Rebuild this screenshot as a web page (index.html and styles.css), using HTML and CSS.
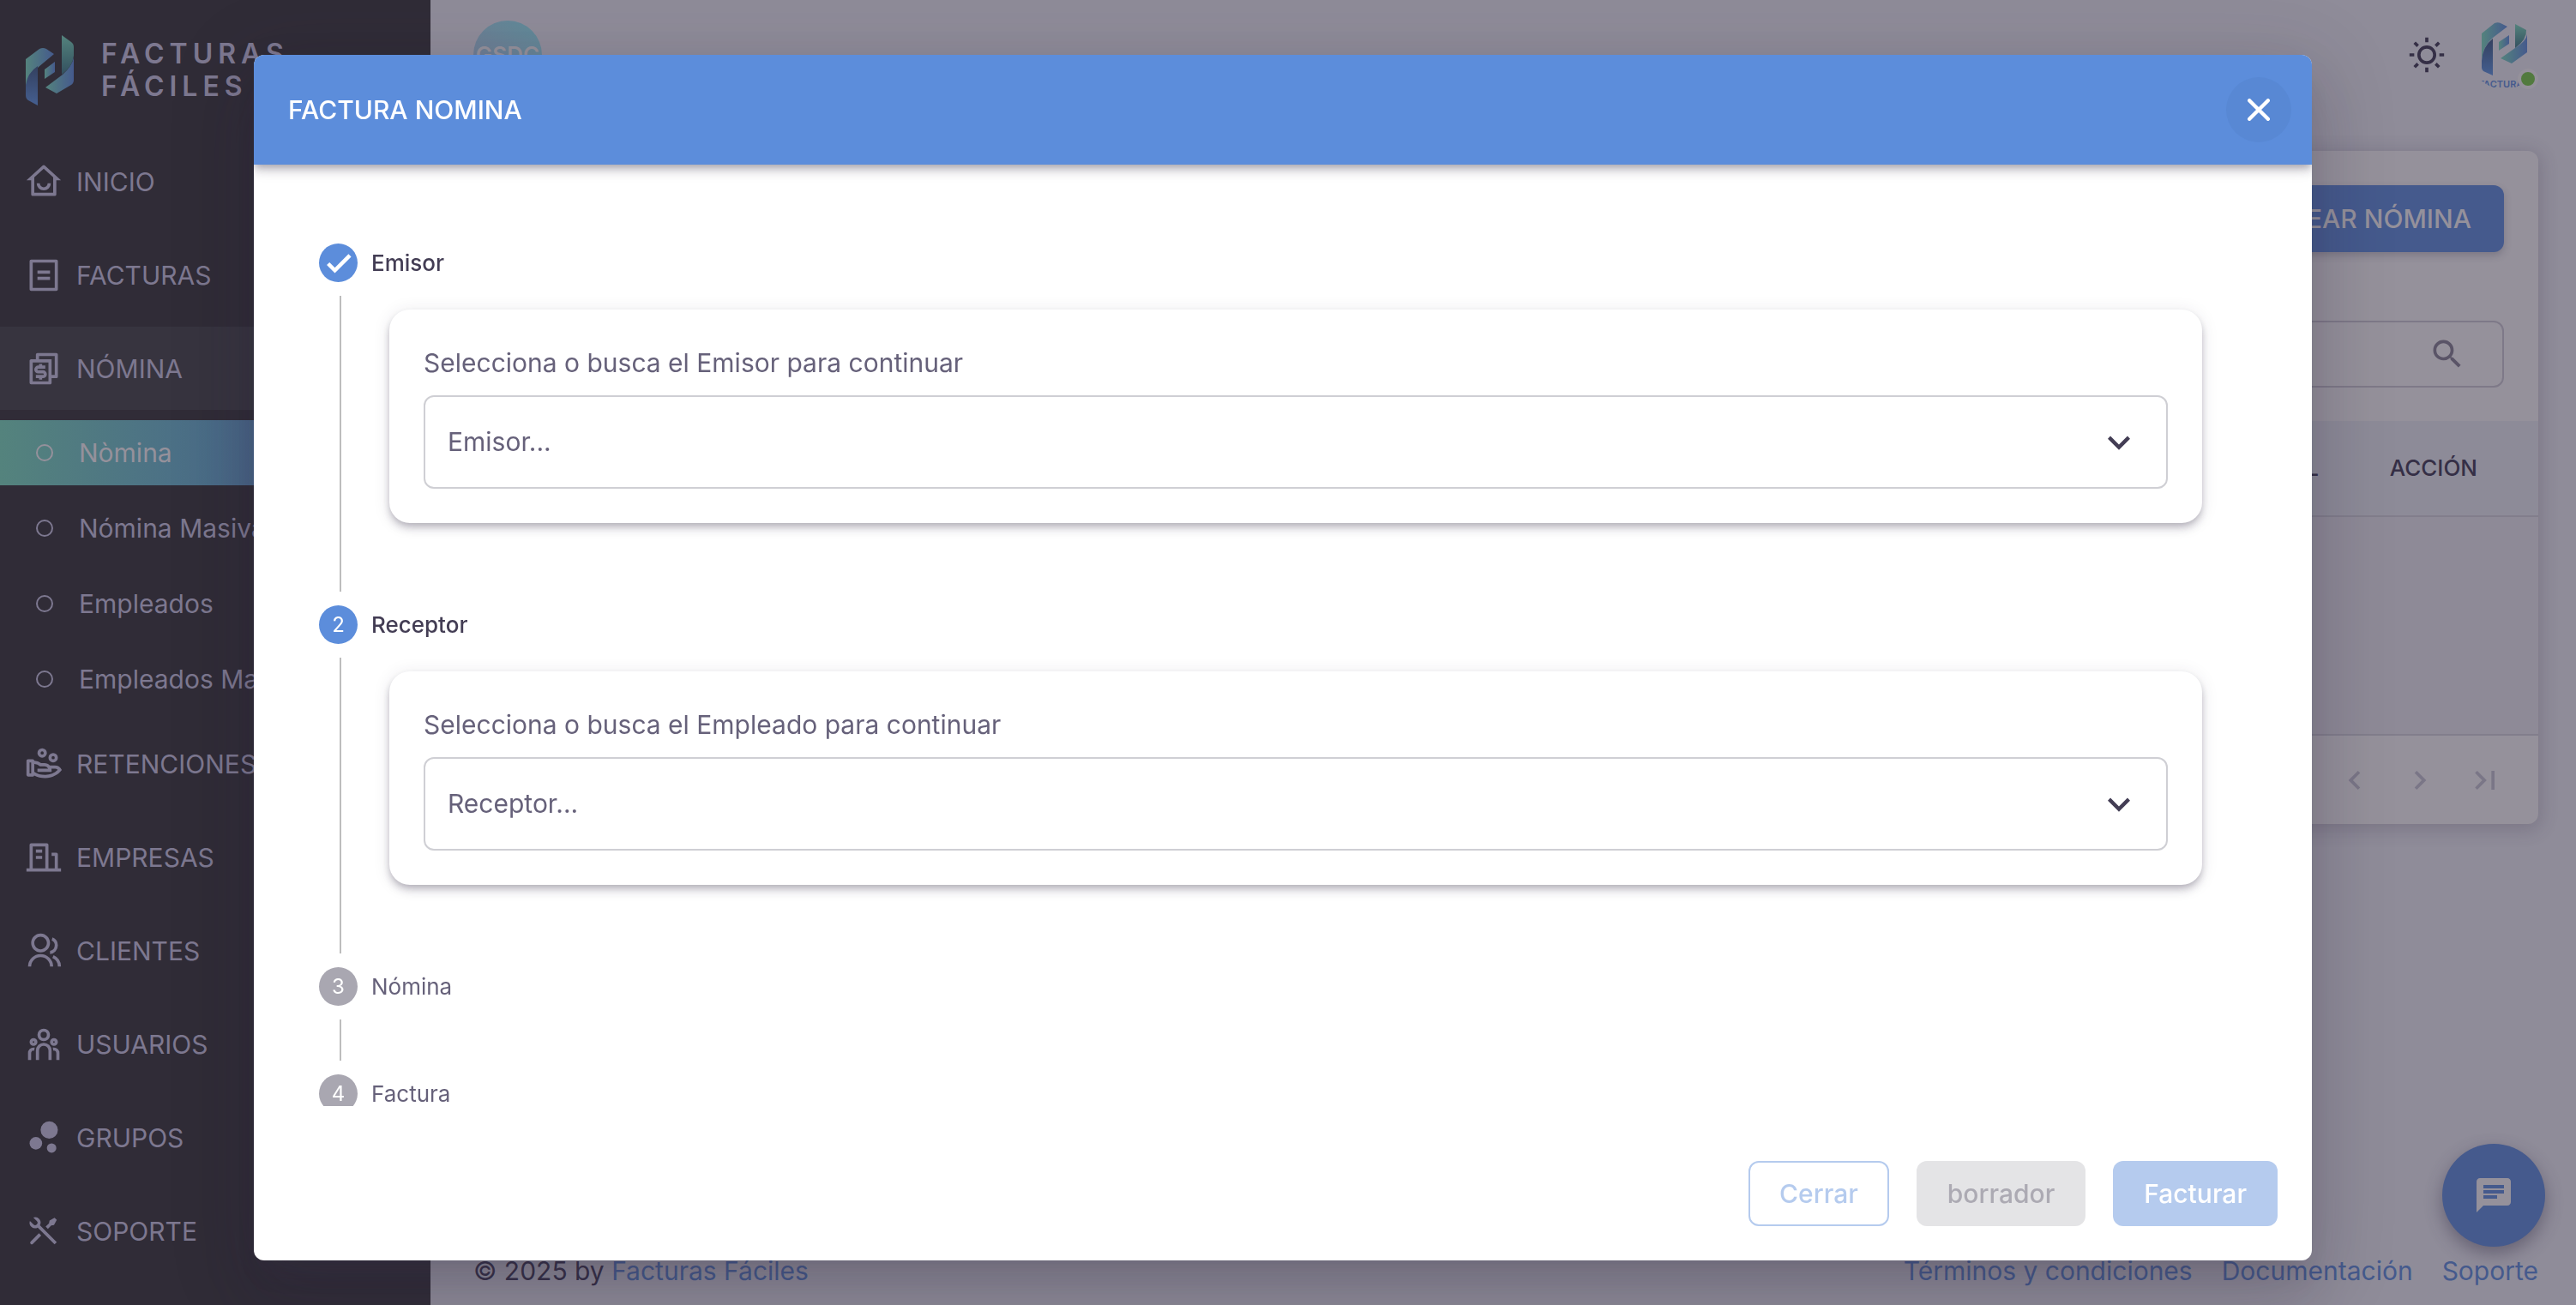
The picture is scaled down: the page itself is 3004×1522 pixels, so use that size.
FILE: index.html
```html
<!DOCTYPE html>
<html lang="es">
<head>
<meta charset="utf-8">
<title>Factura Nomina</title>
<link rel="stylesheet" href="styles.css">
</head>
<body>
<svg class="defs" aria-hidden="true">
  <defs>
    <linearGradient id="brand-gradient" x1="0" y1="0" x2="1" y2="0">
      <stop offset="0" stop-color="#54837d"/>
      <stop offset="1" stop-color="#455a8d"/>
    </linearGradient>
    <linearGradient id="brand-shade" x1="0" y1="1" x2="0" y2="0">
      <stop offset="0" stop-color="#455f90"/>
      <stop offset="1" stop-color="#33405f"/>
    </linearGradient>
    <linearGradient id="brand-shade-top" x1="0" y1="0" x2="0" y2="1">
      <stop offset="0" stop-color="#54837d"/>
      <stop offset="1" stop-color="#33505f"/>
    </linearGradient>
    <symbol id="brand-mark" viewBox="0 0 56 82">
      <path d="M0 28 L16 16 Q20 14 24 16 L33 22 L15 37 Q2 50 0 66 Z" fill="url(#brand-gradient)"/>
      <path d="M0 58 Q2 44 14 36 V82 L3 76 Q0 74 0 70 Z" fill="url(#brand-shade)"/>
      <path d="M22 40 L34 31 V43 L22 51 Z" fill="url(#brand-gradient)"/>
      <path d="M56 26 V52 Q56 56 53 58 L36 68 L23 61 L43 46 Q54 36 56 26 Z" fill="url(#brand-gradient)"/>
      <path d="M42 0 L53 8 Q56 10 56 14 V24 Q55 36 42 46 Z" fill="url(#brand-shade-top)"/>
    </symbol>
    <symbol id="account-mark" viewBox="0 0 53 63">
      <path d="M0 13 L15 1 Q20 -1 24 2 L30 5 L13 18 Q1 28 0 45 Z" fill="url(#brand-gradient)"/>
      <path d="M0 45 Q1 28 13 19 V62 L2 57 Q0 55 0 53 Z" fill="url(#brand-shade)"/>
      <path d="M20 23 L32 15 V25 L20 33 Z" fill="url(#brand-gradient)"/>
      <path d="M53 14 V35 L35 48 L22 42 L39 30 Q52 22 53 14 Z" fill="url(#brand-gradient)"/>
      <path d="M39 2 L52 9 Q53 20 39 30 Z" fill="url(#brand-shade-top)"/>
    </symbol>
  </defs>
</svg>

<div class="app">
  <aside class="sidebar">
    <a class="brand" href="#">
      <svg class="brand-logo"><use href="#brand-mark"/></svg>
      <span class="brand-name">FACTURAS FÁCILES</span>
    </a>
    <nav class="menu">
      <a class="menu-item" href="#"><svg class="icon" viewBox="0 0 24 24"><path d="M19 21H5a1 1 0 01-1-1v-9H1l10.327-9.388a1 1 0 011.346 0L23 11h-3v9a1 1 0 01-1 1zM6 19h12V9.158l-6-5.454-6 5.454V19zm1.500-6h2a2.500 2.500 0 105 0h2a4.500 4.500 0 11-9 0z"/></svg>INICIO</a>
      <a class="menu-item" href="#"><svg class="icon" viewBox="0 0 24 24"><path d="M20 22H4a1 1 0 01-1-1V3a1 1 0 011-1h16a1 1 0 011 1v18a1 1 0 01-1 1zm-1-2V4H5v16h14zM8 9h8v2H8V9zm0 4h8v2H8v-2z"/></svg>FACTURAS</a>
      <a class="menu-item is-open" href="#"><svg class="icon" viewBox="0 0 24 24"><path d="M7 6V3a1 1 0 011-1h12a1 1 0 011 1v14a1 1 0 01-1 1h-3v3c0 .552-.45 1-1.007 1H4.007A1.001 1.001 0 013 21l.003-14c0-.552.45-1 1.007-1H7zm2 0h8v10h2V4H9v2zm-4 2v12h10V8H5zM7 16h4.500a.5.5 0 000-1h-3a2.500 2.500 0 010-5H9V9h2v1h2v2H8.500a.5.5 0 000 1h3a2.500 2.500 0 010 5H11v1H9v-1H7v-2z"/></svg>NÓMINA</a>
      <a class="submenu-item is-active" href="#"><span class="bullet"></span>Nòmina</a>
      <a class="submenu-item" href="#"><span class="bullet"></span>Nómina Masiva</a>
      <a class="submenu-item" href="#"><span class="bullet"></span>Empleados</a>
      <a class="submenu-item" href="#"><span class="bullet"></span>Empleados Masivos</a>
      <a class="menu-item" href="#"><svg class="icon" viewBox="0 0 24 24"><path d="M5 9a.999.999 0 0 1 1 1 6.970 6.970 0 0 1 4.330 1.500h2.170c1.332 0 2.530.579 3.353 1.499L19 13a5 5 0 0 1 4.516 2.851C21.151 18.972 17.322 21 13 21c-2.790 0-5.150-.603-7.060-1.658A.998.998 0 0 1 5 20H2a1 1 0 0 1-1-1v-9a1 1 0 0 1 1-1h3zm1.001 3L6 17.022l.045.032C7.840 18.314 10.178 19 13 19c3.004 0 5.799-1.156 7.835-3.130l.133-.133-.12-.1a2.994 2.994 0 0 0-1.643-.63L19 15l-2.111-.001c.072.322.111.656.111 1v1H8v-2l6.790-.001-.034-.078a2.501 2.501 0 0 0-2.092-1.416L12.500 13.500H9.570A4.985 4.985 0 0 0 6.002 12zM4 11H3v7h1v-7zm14-6a3 3 0 1 1 0 6 3 3 0 0 1 0-6zm0 2a1 1 0 1 0 0 2 1 1 0 0 0 0-2zm-7-5a3 3 0 1 1 0 6 3 3 0 0 1 0-6zm0 2a1 1 0 1 0 0 2 1 1 0 0 0 0-2z"/></svg>RETENCIONES</a>
      <a class="menu-item" href="#"><svg class="icon" viewBox="0 0 24 24"><path d="M21 19h2v2H1v-2h2V4a1 1 0 011-1h10a1 1 0 011 1v15h4v-8h-2V9h3a1 1 0 011 1v9zM5 5v14h8V5H5zm2 6h4v2H7v-2zm0-4h4v2H7V7z"/></svg>EMPRESAS</a>
      <a class="menu-item" href="#"><svg class="icon" viewBox="0 0 24 24"><path d="M2 22a8 8 0 1 1 16 0h-2a6 6 0 1 0-12 0H2zm8-9c-3.315 0-6-2.685-6-6s2.685-6 6-6 6 2.685 6 6-2.685 6-6 6zm0-2c2.210 0 4-1.790 4-4s-1.790-4-4-4-4 1.790-4 4 1.790 4 4 4zm8.284 3.703A8.002 8.002 0 0 1 23 22h-2a6.001 6.001 0 0 0-3.537-5.473l.82-1.824zm-.688-11.290A5.500 5.500 0 0 1 21 8.500a5.499 5.499 0 0 1-5 5.478v-2.013a3.500 3.500 0 0 0 1.041-6.609l.555-1.943z"/></svg>CLIENTES</a>
      <a class="menu-item" href="#"><svg class="icon" viewBox="0 0 24 24"><path d="M12 11a5 5 0 0 1 5 5v6h-2v-6a3 3 0 0 0-2.824-2.995L12 13a3 3 0 0 0-2.995 2.824L9 16v6H7v-6a5 5 0 0 1 5-5zm-6.500 3c.279 0 .55.033.81.094a5.947 5.947 0 0 0-.301 1.575L6 16v.086a1.492 1.492 0 0 0-.356-.08L5.500 16a1.500 1.500 0 0 0-1.493 1.356L4 17.500V22H2v-4.500A3.500 3.500 0 0 1 5.500 14zm13 0a3.500 3.500 0 0 1 3.500 3.500V22h-2v-4.500a1.500 1.500 0 0 0-1.356-1.493L18.500 16c-.175 0-.343.03-.5.085V16c0-.666-.108-1.306-.309-1.904.259-.063.53-.096.809-.096zm-13-6a2.500 2.500 0 1 1 0 5 2.500 2.500 0 0 1 0-5zm13 0a2.500 2.500 0 1 1 0 5 2.500 2.500 0 0 1 0-5zm-13 2a.5.5 0 1 0 0 1 .5.5 0 0 0 0-1zm13 0a.5.5 0 1 0 0 1 .5.5 0 0 0 0-1zM12 2a4 4 0 1 1 0 8 4 4 0 0 1 0-8zm0 2a2 2 0 1 0 0 4 2 2 0 0 0 0-4z"/></svg>USUARIOS</a>
      <a class="menu-item" href="#"><svg class="icon" viewBox="0 0 24 24"><circle cx="15.500" cy="7" r="5.500"/><circle cx="7" cy="15.500" r="4"/><circle cx="17" cy="18.500" r="3"/></svg>GRUPOS</a>
      <a class="menu-item" href="#"><svg class="icon" viewBox="0 0 24 24"><path d="M5.330 3.271a3.500 3.500 0 0 1 4.254 4.963l10.709 10.710-1.414 1.414-10.710-10.710a3.502 3.502 0 0 1-4.962-4.255L5.444 7.630a1.500 1.500 0 1 0 2.121-2.121L5.329 3.270zm10.367 1.884l3.182-1.768 1.414 1.414-1.768 3.182-1.768.354-2.120 2.121-1.415-1.414 2.121-2.121.354-1.768zm-6.718 8.132l1.414 1.414-5.303 5.303a1 1 0 0 1-1.492-1.327l.078-.087 5.303-5.303z"/></svg>SOPORTE</a>
    </nav>
  </aside>

  <div class="page">
    <header class="topbar">
      <span class="company-avatar">GSDC</span>
      <div class="topbar-actions">
        <button class="icon-button theme-toggle" type="button" aria-label="Cambiar tema"><svg class="icon" viewBox="0 0 24 24"><path d="M12 18a6 6 0 1 1 0-12 6 6 0 0 1 0 12zm0-2a4 4 0 1 0 0-8 4 4 0 0 0 0 8zM11 1h2v3h-2V1zm0 19h2v3h-2v-3zM3.515 4.929l1.414-1.414L7.050 5.636 5.636 7.050 3.515 4.930zM16.950 18.364l1.414-1.414 2.121 2.121-1.414 1.414-2.121-2.121zm2.121-14.850l1.414 1.415-2.121 2.121-1.414-1.414 2.121-2.121zM5.636 16.950l1.414 1.414-2.121 2.121-1.414-1.414 2.121-2.121zM23 11v2h-3v-2h3zM4 11v2H1v-2h3z"/></svg></button>
        <button class="user" type="button" aria-label="Cuenta">
          <span class="user-picture">
            <svg class="user-logo"><use href="#account-mark"/></svg>
            <span class="user-caption">FACTURAS</span>
          </span>
          <span class="user-status"></span>
        </button>
      </div>
    </header>

    <main class="card">
      <div class="card-actions"><button class="create-button" type="button">CREAR NÓMINA</button></div>
      <div class="search">
        <input class="search-input" type="search" aria-label="Buscar">
        <svg class="icon" viewBox="0 0 24 24"><path d="M9.500 3A6.500 6.500 0 0 1 16 9.500c0 1.610-.59 3.090-1.560 4.230l.27.27h.79l5 5-1.500 1.500-5-5v-.79l-.27-.27A6.516 6.516 0 0 1 9.500 16 6.500 6.500 0 1 1 9.500 3m0 2C7 5 5 7 5 9.500S7 14 9.500 14 14 12 14 9.500 12 5 9.500 5z"/></svg>
      </div>
      <table class="grid">
        <thead><tr><th class="col-total">TOTAL</th><th class="col-action">ACCIÓN</th></tr></thead>
        <tbody><tr><td colspan="2"></td></tr></tbody>
      </table>
      <div class="pagination">
        <button class="icon-button" type="button" aria-label="Anterior"><svg class="icon" viewBox="0 0 24 24"><path d="M15.410 16.590L10.830 12l4.580-4.590L14 6l-6 6 6 6z"/></svg></button>
        <button class="icon-button" type="button" aria-label="Siguiente"><svg class="icon" viewBox="0 0 24 24"><path d="M8.590 16.590L13.170 12 8.590 7.410 10 6l6 6-6 6z"/></svg></button>
        <button class="icon-button" type="button" aria-label="Última"><svg class="icon" viewBox="0 0 24 24"><path d="M5.590 7.410L10.180 12l-4.590 4.590L7 18l6-6-6-6zM16 6h2v12h-2z"/></svg></button>
      </div>
    </main>

    <footer class="page-footer">
      <p class="copyright">© 2025 by <a href="#">Facturas Fáciles</a></p>
      <nav class="footer-links"><a href="#">Términos y condiciones</a><a href="#">Documentación</a><a href="#">Soporte</a></nav>
    </footer>
  </div>
</div>

<button class="chat-button" type="button" aria-label="Chat"><svg class="chat-icon" viewBox="0 0 24 24"><path d="M20 2H4c-1.100 0-1.990.9-1.990 2L2 22l4-4h14c1.100 0 2-.9 2-2V4c0-1.100-.9-2-2-2zM6 9h12v2H6V9zm8 5H6v-2h8v2zm4-6H6V6h12v2z"/></svg></button>

<div class="overlay">
  <section class="dialog" role="dialog" aria-modal="true" aria-labelledby="dialog-title">
    <header class="dialog-header">
      <h1 class="dialog-title" id="dialog-title">FACTURA NOMINA</h1>
      <button class="close-button" type="button" aria-label="Cerrar ventana"><svg class="close-icon" viewBox="0 0 24 24"><path d="M2 2L22 22M22 2L2 22"/></svg></button>
    </header>

    <ol class="stepper">
      <li class="step is-current">
        <div class="step-label"><span class="step-dot"><svg class="check-icon" viewBox="0 0 24 24"><path d="M9 16.170L4.830 12l-1.420 1.410L9 19 21 7l-1.410-1.410z"/></svg></span>Emisor</div>
        <div class="step-body">
          <div class="field-card">
            <label class="field-label" for="emisor">Selecciona o busca el Emisor para continuar</label>
            <div class="select-box">
              <select id="emisor" class="select"><option>Emisor...</option></select>
              <svg class="select-arrow" viewBox="0 0 24 24"><path d="M7.410 8.580L12 13.170l4.590-4.590L18 10l-6 6-6-6z"/></svg>
            </div>
          </div>
        </div>
      </li>
      <li class="step is-current">
        <div class="step-label"><span class="step-dot">2</span>Receptor</div>
        <div class="step-body">
          <div class="field-card">
            <label class="field-label" for="receptor">Selecciona o busca el Empleado para continuar</label>
            <div class="select-box">
              <select id="receptor" class="select"><option>Receptor...</option></select>
              <svg class="select-arrow" viewBox="0 0 24 24"><path d="M7.410 8.580L12 13.170l4.590-4.590L18 10l-6 6-6-6z"/></svg>
            </div>
          </div>
        </div>
      </li>
      <li class="step">
        <div class="step-label"><span class="step-dot">3</span>Nómina</div>
        <div class="step-body"></div>
      </li>
      <li class="step">
        <div class="step-label"><span class="step-dot">4</span>Factura</div>
      </li>
    </ol>

    <footer class="dialog-footer">
      <button class="button button-outlined" type="button" disabled>Cerrar</button>
      <button class="button button-muted" type="button" disabled>borrador</button>
      <button class="button button-filled" type="button" disabled>Facturar</button>
    </footer>
  </section>
</div>
</body>
</html>
```
FILE: styles.css
```css
* { box-sizing: border-box; }

body {
  margin: 0;
  background: #8f8c99;
  color: #352f46;
  font-family: Inter, "Liberation Sans", sans-serif;
  font-size: 30px;
  line-height: 44px;
  overflow: hidden;
}

a { color: inherit; text-decoration: none; }

button, input, select { font: inherit; color: inherit; }

button {
  border: 0;
  padding: 0;
  background: none;
}

.defs { position: absolute; width: 0; height: 0; }

.icon {
  width: 44px;
  height: 44px;
  flex: none;
  fill: currentColor;
}

.app {
  display: flex;
  height: 100vh;
}

/* Sidebar */
.sidebar {
  width: 502px;
  flex: none;
  overflow: hidden;
  background: #302c37;
  color: #7d7890;
}

.brand {
  display: flex;
  align-items: center;
  gap: 32px;
  height: 163px;
  padding-left: 30px;
}

.brand-logo { width: 56px; height: 82px; flex: none; }

.brand-name {
  width: 260px;
  font-size: 32px;
  font-weight: 600;
  line-height: 38px;
  letter-spacing: 6px;
}

.menu {
  display: flex;
  flex-direction: column;
  gap: 12px;
}

.menu-item, .submenu-item {
  display: flex;
  align-items: center;
  white-space: nowrap;
}

.menu-item {
  gap: 16px;
  height: 97px;
  padding-left: 29px;
}

.menu-item.is-open { background: #37343f; }

.submenu-item {
  gap: 30px;
  height: 76px;
  padding-left: 42px;
}

.submenu-item.is-active {
  background: linear-gradient(90deg, #54837d, #4a6c88 50%, #433f7d);
  color: #95919b;
}

.bullet {
  width: 20px;
  height: 20px;
  border: 2px solid;
  border-radius: 50%;
}

/* Page */
.page {
  flex: 1;
  min-width: 0;
  display: flex;
  flex-direction: column;
  padding: 0 44px 0 50px;
}

.topbar {
  display: flex;
  justify-content: space-between;
  align-items: center;
  height: 128px;
  margin-bottom: 48px;
}

.company-avatar {
  display: grid;
  place-items: center;
  width: 80px;
  height: 80px;
  border-radius: 50%;
  background: linear-gradient(30deg, #77758f, #5f8c9a);
  color: #95919b;
  font-size: 26px;
  font-weight: 600;
}

.topbar-actions {
  display: flex;
  align-items: center;
  gap: 12px;
}

.icon-button {
  display: grid;
  place-items: center;
  width: 76px;
  height: 76px;
}

.user { position: relative; width: 80px; height: 80px; }

.user-picture {
  display: flex;
  flex-direction: column;
  align-items: center;
  width: 80px;
  height: 80px;
  padding-top: 2px;
  border-radius: 50%;
  overflow: hidden;
}

.user-logo { width: 53px; height: 63px; flex: none; }

.user-caption {
  color: #455a8d;
  font-size: 11px;
  font-weight: 600;
  line-height: 18px;
}

.user-status {
  position: absolute;
  right: 0;
  bottom: 0;
  width: 24px;
  height: 24px;
  border: 4px solid #95919b;
  border-radius: 50%;
  background: #527a3e;
}

.card {
  border-radius: 12px;
  background: #95919b;
  box-shadow: 0 4px 20px 4px rgba(53, 47, 70, .2);
}

.card-actions {
  display: flex;
  justify-content: flex-end;
  padding: 40px 40px 80px;
}

.create-button {
  height: 78px;
  padding: 0 38px;
  border-radius: 12px;
  background: #455a8d;
  color: #95919b;
  font-weight: 500;
  box-shadow: 0 4px 8px rgba(53, 47, 70, .25);
}

.search {
  display: flex;
  align-items: center;
  height: 78px;
  margin: 0 40px 39px;
  padding: 0 42px 0 28px;
  border: 2px solid #7e7988;
  border-radius: 12px;
  color: #5a5467;
}

.search-input {
  flex: 1;
  border: 0;
  background: none;
  outline: 0;
}

.grid {
  width: 100%;
  border-collapse: collapse;
  background: #8e8a97;
  font-size: 26px;
}

.grid th {
  height: 111px;
  padding: 0;
  border-bottom: 2px solid #827e8c;
  background: #8d8b98;
  font-weight: 500;
  text-align: right;
}

.grid .col-action { width: 256px; padding-right: 71px; }

.grid td { height: 255px; border-bottom: 2px solid #827e8c; }

.pagination {
  display: flex;
  justify-content: flex-end;
  align-items: center;
  height: 103px;
  padding-right: 24px;
  color: #7a7687;
}

.page-footer {
  display: flex;
  justify-content: space-between;
  margin-top: auto;
  padding-bottom: 18px;
}

.copyright { margin: 0; }

.page-footer a { color: #455a8d; }

.footer-links { display: flex; gap: 34px; }

.chat-button {
  position: fixed;
  right: 36px;
  bottom: 68px;
  display: grid;
  place-items: center;
  width: 120px;
  height: 120px;
  border-radius: 50%;
  background: #455a8d;
  color: #95919b;
  box-shadow: 0 8px 20px rgba(53, 47, 70, .45);
}

.chat-icon { width: 48px; height: 48px; fill: currentColor; }

/* Dialog */
.overlay {
  position: fixed;
  inset: 0;
  display: flex;
  justify-content: center;
  padding: 64px 12px 52px 0;
}

.dialog {
  display: flex;
  flex-direction: column;
  width: 100%;
  max-width: 2400px;
  border-radius: 12px;
  overflow: hidden;
  background: #fff;
  color: #433d54;
  box-shadow: 0 22px 30px -14px rgba(49, 44, 66, .2), 0 48px 76px 6px rgba(49, 44, 66, .14), 0 18px 92px 16px rgba(49, 44, 66, .12);
}

.dialog-header {
  display: flex;
  justify-content: space-between;
  align-items: center;
  flex: none;
  height: 128px;
  padding: 0 24px 0 40px;
  background: #5c8ddb;
  color: #fff;
  box-shadow: 0 4px 8px -2px rgba(49, 44, 66, .3), 0 8px 10px rgba(49, 44, 66, .14), 0 2px 20px rgba(49, 44, 66, .12);
}

.dialog-title { margin: 0; font-size: 30px; font-weight: 500; }

.close-button {
  display: grid;
  place-items: center;
  width: 76px;
  height: 76px;
  border-radius: 50%;
  background: #5888d4;
}

.close-icon {
  width: 26px;
  height: 26px;
  fill: none;
  stroke: #fff;
  stroke-width: 4;
  stroke-linecap: round;
}

.stepper {
  flex: 1;
  min-height: 0;
  overflow: hidden;
  margin: 0;
  padding: 92px 128px 0 76px;
  list-style: none;
}

.step-label {
  display: flex;
  align-items: center;
  gap: 16px;
  height: 45px;
  color: #66617a;
  font-size: 26px;
}

.step.is-current .step-label { color: #433d54; font-weight: 500; }

.step-dot {
  display: grid;
  place-items: center;
  width: 45px;
  height: 45px;
  border-radius: 50%;
  background: #a9a7b1;
  color: #fff;
  font-size: 24px;
  font-weight: 400;
}

.step.is-current .step-dot { background: #5c8ddb; }

.check-icon {
  width: 36px;
  height: 36px;
  fill: currentColor;
  stroke: currentColor;
  stroke-width: 1;
}

.step-body {
  min-height: 48px;
  margin: 16px 0 16px 24px;
  padding-left: 56px;
  border-left: 2px solid #bdbdbd;
}

.step.is-current .step-body { padding-top: 16px; padding-bottom: 80px; }

.field-card {
  padding: 40px;
  border-radius: 24px;
  background: #fff;
  box-shadow: 0 4px 8px -2px rgba(49, 44, 66, .3), 0 8px 10px rgba(49, 44, 66, .1), 0 2px 20px rgba(49, 44, 66, .1);
}

.field-label {
  display: block;
  margin-bottom: 16px;
  color: #66617a;
}

.select-box { display: grid; align-items: center; }

.select, .select-arrow { grid-area: 1 / 1; }

.select {
  width: 100%;
  height: 109px;
  padding: 0 26px 2px;
  border: 2px solid #cfcfd4;
  border-radius: 12px;
  background: #fff;
  color: #66617a;
  appearance: none;
}

.select-arrow {
  justify-self: end;
  width: 52px;
  height: 52px;
  margin-right: 31px;
  fill: #433d54;
  pointer-events: none;
}

.dialog-footer {
  display: flex;
  justify-content: flex-end;
  gap: 32px;
  flex: none;
  padding: 64px 40px 40px;
}

.button {
  height: 76px;
  padding: 0 36px;
  border-radius: 12px;
  font-weight: 500;
}

.button-outlined { border: 2px solid #b5cbee; color: #b5cbee; padding: 0 34px; }

.button-muted { background: #e4e4e6; color: #acaab3; }

.button-filled { background: #b5cbee; color: #fff; }
```
